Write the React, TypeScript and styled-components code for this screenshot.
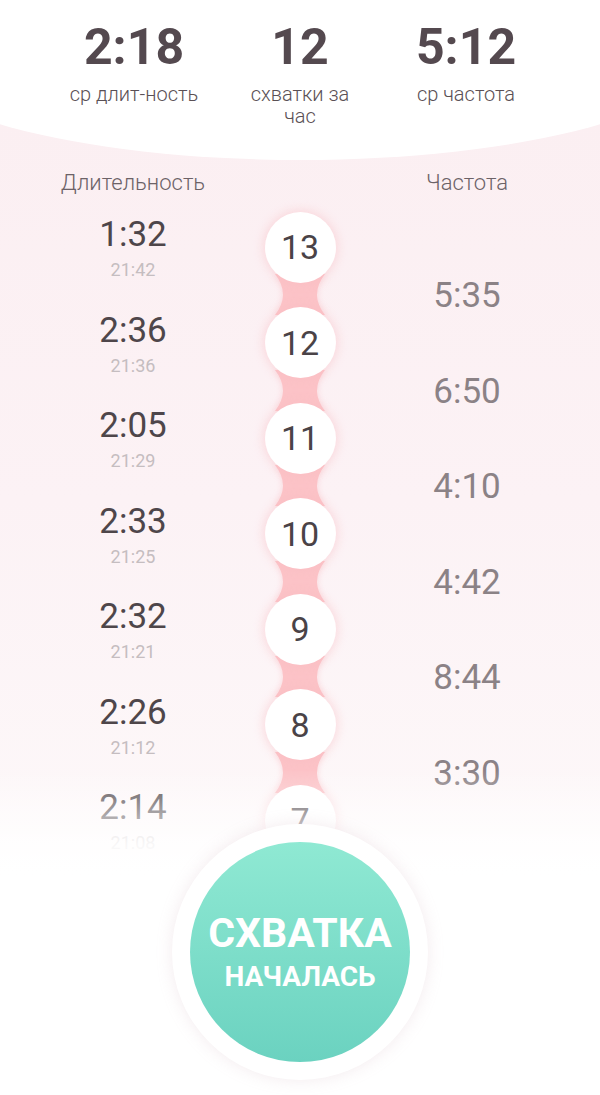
import React from 'react';
import styled, { createGlobalStyle } from 'styled-components';

const GlobalStyle = createGlobalStyle`
  html, body {
    margin: 0;
    padding: 0;
  }
  body {
    font-family: Roboto, "Noto Sans", "Liberation Sans", sans-serif;
    background: linear-gradient(#fbeef1 0, #fcf2f5 500px, #fdf8f9 850px, #ffffff 1000px);
    min-height: 1095px;
    overflow: hidden;
  }
`;

const stats = [
  { value: '2:18', label: 'ср длит-ность' },
  { value: '12', label: 'схватки за час', narrow: true },
  { value: '5:12', label: 'ср частота' },
];

const rows = [
  { num: 13, duration: '1:32', time: '21:42', freq: '5:35' },
  { num: 12, duration: '2:36', time: '21:36', freq: '6:50' },
  { num: 11, duration: '2:05', time: '21:29', freq: '4:10' },
  { num: 10, duration: '2:33', time: '21:25', freq: '4:42' },
  { num: 9, duration: '2:32', time: '21:21', freq: '8:44' },
  { num: 8, duration: '2:26', time: '21:12', freq: '3:30' },
  { num: 7, duration: '2:14', time: '21:08', freq: '' },
];

const Connector = () => (
  <Link viewBox="0 0 64 41" width="64" height="41">
    <path d="M7 0 H57 Q41 20.5 57 41 H7 Q23 20.5 7 0 Z" fill="#fcc3c7" />
  </Link>
);

const App = () => {
  return (
    <Page>
      <GlobalStyle />
      <Header>
        <Stats>
          {stats.map((s) => (
            <Stat key={s.value}>
              <StatValue>{s.value}</StatValue>
              <StatLabel narrow={s.narrow}>{s.label}</StatLabel>
            </Stat>
          ))}
        </Stats>
      </Header>

      <ColumnHeads>
        <ColumnHead>Длительность</ColumnHead>
        <span />
        <ColumnHead>Частота</ColumnHead>
      </ColumnHeads>

      <List>
        {rows.map((r, i) => (
          <Row key={r.num}>
            <Left>
              <Duration>{r.duration}</Duration>
              <Time>{r.time}</Time>
            </Left>
            <Middle>
              <Bubble>{r.num}</Bubble>
              {i < rows.length - 1 && <Connector />}
            </Middle>
            <Right>{r.freq && <Freq>{r.freq}</Freq>}</Right>
          </Row>
        ))}
      </List>

      <Footer>
        <Ring>
          <StartButton>
            <BigWord>СХВАТКА</BigWord>
            <SmallWord>НАЧАЛАСЬ</SmallWord>
          </StartButton>
        </Ring>
      </Footer>
    </Page>
  );
};

export default App;

const Page = styled.div`
  width: 600px;
  overflow: hidden;
`;

const Header = styled.div`
  width: 820px;
  margin-left: -110px;
  height: 160px;
  box-sizing: border-box;
  padding: 19px 110px 0;
  background: #ffffff;
  border-radius: 0 0 410px 410px / 0 0 112px 112px;
`;

const Stats = styled.div`
  display: grid;
  grid-template-columns: repeat(3, 166px);
  justify-content: center;
`;

const Stat = styled.div`
  display: flex;
  flex-direction: column;
  align-items: center;
  text-align: center;
`;

const StatValue = styled.div`
  font-size: 50px;
  line-height: 56px;
  font-weight: 700;
  color: #54494f;
`;

const StatLabel = styled.div<{ narrow?: boolean }>`
  margin-top: 8px;
  font-size: 20px;
  line-height: 22px;
  font-weight: 300;
  color: #5a5055;
  max-width: ${(p) => (p.narrow ? '100px' : 'none')};
`;

const ColumnHeads = styled.div`
  display: grid;
  grid-template-columns: 266px 68px 266px;
  margin-top: 11px;
  text-align: center;
`;

const ColumnHead = styled.div`
  font-size: 22px;
  line-height: 24px;
  font-weight: 300;
  color: #6c6267;
`;

const List = styled.div`
  margin-top: 16.5px;
  display: flex;
  flex-direction: column;
`;

const Row = styled.div`
  display: grid;
  grid-template-columns: 266px 68px 266px;
  height: 95.5px;
`;

const Left = styled.div`
  display: flex;
  flex-direction: column;
  align-items: center;
  padding-top: 3.5px;
`;

const Duration = styled.div`
  font-size: 35px;
  line-height: 40px;
  color: #4e464a;
`;

const Time = styled.div`
  margin-top: 4px;
  font-size: 18px;
  line-height: 22px;
  color: #c5bdc0;
`;

const Middle = styled.div`
  display: flex;
  flex-direction: column;
  align-items: center;
`;

const Bubble = styled.div`
  position: relative;
  z-index: 2;
  flex: none;
  width: 71px;
  height: 71px;
  border-radius: 50%;
  background: #ffffff;
  box-shadow: 0 0 10px 2px rgba(248, 186, 192, 0.45);
  display: flex;
  align-items: center;
  justify-content: center;
  font-size: 34px;
  color: #4a4347;
`;

const Link = styled.svg`
  display: block;
  flex: none;
  margin: -8.25px 0;
  position: relative;
  z-index: 1;
  filter: drop-shadow(0 0 3px rgba(250, 190, 196, 0.6));
`;

const Right = styled.div`
  display: flex;
  justify-content: center;
  padding-top: 64.5px;
`;

const Freq = styled.div`
  font-size: 35px;
  line-height: 40px;
  color: #8b8286;
`;

const Footer = styled.div`
  position: relative;
  z-index: 3;
  margin-top: -120px;
  padding: 64px 0 15px;
  display: flex;
  justify-content: center;
  background: linear-gradient(
    rgba(255, 255, 255, 0) 10px,
    rgba(255, 255, 255, 0.88) 85px,
    #ffffff 115px
  );
`;

const Ring = styled.div`
  width: 256px;
  height: 256px;
  border-radius: 50%;
  background: #ffffff;
  box-shadow: 0 0 16px rgba(200, 165, 178, 0.22);
  display: flex;
  align-items: center;
  justify-content: center;
`;

const StartButton = styled.div`
  width: 220px;
  height: 220px;
  border-radius: 50%;
  background: linear-gradient(#8fe9d3, #6bd2c0);
  display: flex;
  flex-direction: column;
  align-items: center;
  justify-content: center;
  color: #ffffff;
  font-weight: 700;
`;

const BigWord = styled.div`
  font-size: 41px;
  line-height: 44px;
`;

const SmallWord = styled.div`
  margin-top: 5.5px;
  font-size: 28px;
  line-height: 32px;
`;
